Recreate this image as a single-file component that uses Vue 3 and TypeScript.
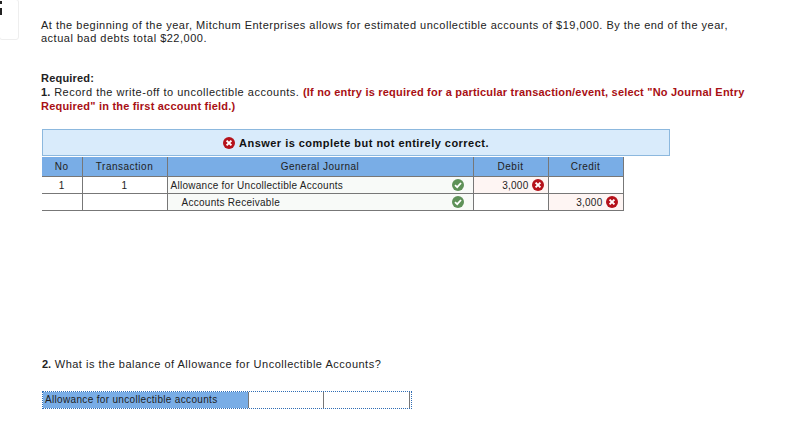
<script setup lang="ts">
interface Row { no: string; tx: string; account: string; indent: boolean; debit: string; credit: string }
const rows: Row[] = [
  { no: '1', tx: '1', account: 'Allowance for Uncollectible Accounts', indent: false, debit: '3,000', credit: '' },
  { no: '', tx: '', account: 'Accounts Receivable', indent: true, debit: '', credit: '3,000' },
]
</script>

<template>
  <div class="page">
    <div class="corner"><span class="mark"></span></div>
    <p class="intro">At the beginning of the year, Mitchum Enterprises allows for estimated uncollectible accounts of $19,000. By the end of the year,<br />actual bad debts total $22,000.</p>
    <div class="req">
      <div class="line"><strong>Required:</strong></div>
      <div class="line"><strong class="num">1.</strong> Record the write-off to uncollectible accounts. <strong class="red">(If no entry is required for a particular transaction/event, select "No Journal Entry</strong></div>
      <div class="line"><strong class="red">Required" in the first account field.)</strong></div>
    </div>
    <div class="alert">
      <svg class="ic" viewBox="0 0 12 12"><circle cx="6" cy="6" r="6" fill="#b5121b" /><path d="M3.6 3.6l4.8 4.8M8.4 3.6l-4.8 4.8" stroke="#fff" stroke-width="2" /></svg>
      <span>Answer is complete but not entirely correct.</span>
    </div>
    <table class="journal">
      <colgroup>
        <col class="c1" /><col class="c2" /><col class="c3" /><col class="c4" /><col class="c5" />
      </colgroup>
      <thead>
        <tr><th>No</th><th>Transaction</th><th>General Journal</th><th>Debit</th><th>Credit</th></tr>
      </thead>
      <tbody>
        <tr v-for="(r, i) in rows" :key="i">
          <td class="ctr">{{ r.no }}</td>
          <td class="ctr">{{ r.tx }}</td>
          <td class="acct">
            <div class="acct-in">
              <span :class="{ indent: r.indent }">{{ r.account }}</span>
              <svg class="ic ok" viewBox="0 0 12 12"><circle cx="6" cy="6" r="6" fill="#5e9158" /><path d="M3 6.2l2.2 2L9 4" fill="none" stroke="#fff" stroke-width="1.8" /></svg>
            </div>
          </td>
          <td :class="['amt', { bad: r.debit }]">
            <div v-if="r.debit" class="amt-in">{{ r.debit }}<svg class="ic" viewBox="0 0 12 12"><circle cx="6" cy="6" r="6" fill="#b5121b" /><path d="M3.6 3.6l4.8 4.8M8.4 3.6l-4.8 4.8" stroke="#fff" stroke-width="2" /></svg></div>
          </td>
          <td :class="['amt', 'cr', { bad: r.credit }]">
            <div v-if="r.credit" class="amt-in">{{ r.credit }}<svg class="ic" viewBox="0 0 12 12"><circle cx="6" cy="6" r="6" fill="#b5121b" /><path d="M3.6 3.6l4.8 4.8M8.4 3.6l-4.8 4.8" stroke="#fff" stroke-width="2" /></svg></div>
          </td>
        </tr>
      </tbody>
    </table>
    <p class="q2"><strong class="num">2.</strong> What is the balance of Allowance for Uncollectible Accounts?</p>
    <div class="balance">
      <div class="b-label">Allowance for uncollectible accounts</div>
      <div class="b-cell"></div>
      <div class="b-cell last"></div>
    </div>
  </div>
</template>

<style>
html, body { margin: 0; background: #fff; }
</style>

<style scoped>
.page {
  position: relative;
  width: 790px;
  height: 446px;
  overflow: hidden;
  box-sizing: border-box;
  padding: 19px 30px 0 41px;
  font-family: "Liberation Sans", Arial, sans-serif;
  font-size: 11px;
  letter-spacing: 0.5px;
  color: #222;
}
.corner {
  position: absolute;
  left: -1px;
  top: -1px;
  width: 18px;
  height: 39px;
  border: 1px solid #eee;
  border-radius: 3px;
}
.mark {
  position: absolute;
  left: 0;
  top: 1px;
  width: 2px;
  height: 14px;
  background: linear-gradient(#222 0 3px, #fff 3px 7px, #222 7px 14px);
}
.intro { margin: 0; line-height: 13px; white-space: nowrap; }
.req { margin: 26px 0 0; }
.line { height: 14px; line-height: 14px; white-space: nowrap; }
.req strong { font-weight: 700; letter-spacing: 0.2px; }
.req .red { color: #a80f14; }
.alert {
  display: flex;
  align-items: center;
  justify-content: center;
  gap: 4px;
  width: 626px;
  height: 25px;
  margin: 16px 0 0 1px;
  background: #d9ebfb;
  border: 1px solid #8cb8de;
  font-weight: 700;
  letter-spacing: 0.47px;
  color: #111;
}
.ic { width: 12px; height: 12px; flex: none; }
.journal {
  border-collapse: collapse;
  table-layout: fixed;
  width: 581px;
  margin: 1px 0 0 1px;
  font-size: 10px;
  letter-spacing: 0.27px;
  color: #222;
}
.c1 { width: 40px; } .c2 { width: 85px; } .c3 { width: 306px; } .c4 { width: 75px; } .c5 { width: 75px; }
th {
  height: 19px;
  padding: 0;
  background: #79ade6;
  font-weight: 400;
  letter-spacing: 0.5px;
  border-left: 1px solid #777;
  border-right: 1px solid #777;
  border-bottom: 1px solid #777;
}
th:first-child, td:first-child { border-left: none; }
td {
  height: 16px;
  padding: 0;
  border: 1px solid #777;
  border-top: none;
}
.ctr { text-align: center; }
.acct { background: #f8faf8; padding: 0 9px 0 3px; }
.acct-in { display: flex; justify-content: space-between; align-items: center; }
.indent { padding-left: 11px; }
.amt { background: #fff; }
.amt.bad { background: #fef5f3; }
.amt-in { display: flex; justify-content: flex-end; align-items: center; gap: 3px; padding-right: 4px; }
.cr .amt-in { padding-right: 5px; }
.q2 { margin: 146px 0 0 1px; line-height: 14px; }
.q2 .num { letter-spacing: 0; }
.balance {
  display: flex;
  width: 368px;
  height: 16px;
  margin: 20px 0 0 1px;
  border: 1px dotted #2f6db5;
  font-size: 10px;
  letter-spacing: 0.33px;
  line-height: 16px;
}
.b-label { width: 206px; box-sizing: border-box; background: #79ade6; padding-left: 2px; border-right: 1px solid #777; }
.b-cell { width: 75px; box-sizing: border-box; border-right: 1px solid #777; }
.b-cell.last { width: 86px; }
</style>
